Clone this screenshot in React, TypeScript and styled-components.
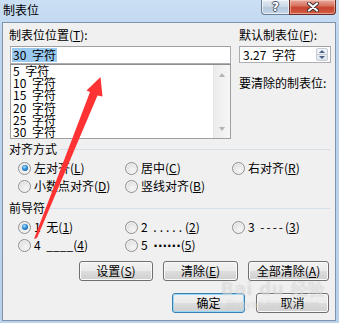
import React from 'react';
import styled, { createGlobalStyle, css } from 'styled-components';

const Global = createGlobalStyle`
  html, body { margin: 0; padding: 0; width: 339px; height: 323px; overflow: hidden; }
  body {
    font-family: "Noto Sans CJK SC", "Noto Sans", "DejaVu Sans", sans-serif;
    font-size: 12px;
    word-spacing: 3px;
    color: #000;
  }
  * { box-sizing: border-box; }
`;

const Window = styled.div`
  position: relative;
  width: 339px;
  height: 323px;
  display: flex;
  flex-direction: column;
  padding: 0 3px 2px 2px;
  background: linear-gradient(to bottom, #cadff3 0px, #bdd5ee 40px, #b9d1ea 100%);
`;

const TitleBar = styled.div`
  height: 22px;
  flex-shrink: 0;
  display: flex;
  align-items: flex-start;
`;

const Title = styled.div`
  padding: 2px 0 0 1px;
  font-size: 12px;
  line-height: 16px;
  color: #000;
`;

const CaptionButtons = styled.div`
  margin-left: auto;
  display: flex;
`;

const CaptionBase = css`
  height: 15px;
  display: flex;
  align-items: center;
  justify-content: center;
  border: 1px solid #6d7f99;
  border-top: none;
`;

const HelpBtn = styled.div`
  ${CaptionBase};
  width: 28px;
  border-right: none;
  border-bottom-left-radius: 4px;
  background: linear-gradient(to bottom, #e3ebf4 0%, #cdd9e7 45%, #b6c8dc 55%, #c5d6e8 100%);
  box-shadow: inset 0 0 0 1px rgba(255, 255, 255, 0.6);
  color: #fff;
  font-family: "DejaVu Sans", sans-serif;
  font-weight: bold;
  font-size: 12px;
  line-height: 12px;
  text-shadow: 1px 0 0 #4a5566, -1px 0 0 #4a5566, 0 1px 0 #4a5566, 0 -1px 0 #4a5566;
`;

const CloseBtn = styled.div`
  ${CaptionBase};
  width: 47px;
  border-color: #6b2a24;
  border-bottom-right-radius: 4px;
  background: linear-gradient(to bottom, #e8a99d 0%, #d8745f 40%, #c7432f 55%, #d35e45 100%);
  box-shadow: inset 0 0 0 1px rgba(255, 220, 210, 0.5);
`;

const Client = styled.div`
  flex: 1;
  display: flex;
  flex-direction: column;
  border: 1px solid #7f93ab;
  background: #f0f0f0;
  padding: 4px 3px 0 6px;
`;

const TopSection = styled.div`
  display: flex;
  gap: 8px;
`;

const LeftCol = styled.div`
  width: 222px;
  display: flex;
  flex-direction: column;
`;

const RightCol = styled.div`
  flex: 1;
  display: flex;
  flex-direction: column;
`;

const Label = styled.div`
  line-height: 16px;
  height: 16px;
  white-space: nowrap;
  margin-bottom: 3px;
`;

const U = styled.span`
  text-decoration: underline;
`;

const TextBox = styled.div`
  margin-left: 1px;
  height: 18px;
  border: 1px solid #abadb3;
  border-top-color: #a0a0a0;
  background: #fff;
  padding: 1px 0 0 1px;
  line-height: 13px;
  display: flex;
  align-items: flex-start;
`;

const Selected = styled.span`
  background: #99c9ef;
  padding: 0 1px;
  line-height: 14px;
  white-space: pre;
`;

const ListBox = styled.div`
  margin-left: 1px;
  height: 75px;
  border: 1px solid #a0a0a0;
  border-top-color: #8e8e8e;
  background: #fff;
  display: flex;
`;

const ListItems = styled.div`
  flex: 1;
  padding: 0 0 0 2px;
`;

const ListItem = styled.div`
  line-height: 12.2px;
  height: 12.2px;
  white-space: pre;
`;

const ScrollBar = styled.div`
  width: 17px;
  background: linear-gradient(to right, #ececec, #f6f6f6);
  border-left: 1px solid #e6e6e6;
  display: flex;
  flex-direction: column;
  justify-content: space-between;
  align-items: center;
  padding: 8px 0 7px;
`;

const Tri = styled.div<{ $down?: boolean }>`
  width: 0;
  height: 0;
  border-left: 3.5px solid transparent;
  border-right: 3.5px solid transparent;
  ${(p) =>
    p.$down
      ? css`border-top: 4px solid #b4b4b4;`
      : css`border-bottom: 4px solid #b4b4b4;`}
`;

const SpinBox = styled.div`
  height: 17px;
  width: 92px;
  border: 1px solid #abadb3;
  border-top-color: #a0a0a0;
  background: #fff;
  display: flex;
  align-items: center;
  padding: 0 2px 0 3px;
`;

const SpinText = styled.span`
  flex: 1;
  line-height: 14px;
  white-space: pre;
`;

const SpinButtons = styled.div`
  width: 12px;
  height: 13px;
  display: flex;
  flex-direction: column;
  border: 1px solid #c5ccd6;
  border-radius: 2px;
  background: linear-gradient(to bottom, #f4f6f9, #dfe5ec);
`;

const SpinHalf = styled.div`
  flex: 1;
  display: flex;
  align-items: center;
  justify-content: center;
  & + & { border-top: 1px solid #c5ccd6; }
`;

const SmallTri = styled.div<{ $down?: boolean }>`
  width: 0;
  height: 0;
  border-left: 3px solid transparent;
  border-right: 3px solid transparent;
  ${(p) =>
    p.$down
      ? css`border-top: 3px solid #4d6185;`
      : css`border-bottom: 3px solid #4d6185;`}
`;

const Note = styled.div`
  margin-top: 12px;
  line-height: 16px;
  white-space: nowrap;
`;

const Group = styled.div<{ $top: number }>`
  margin-top: ${(p) => p.$top}px;
  display: flex;
  flex-direction: column;
`;

const GroupHeader = styled.div`
  display: flex;
  align-items: center;
  gap: 3px;
  line-height: 16px;
  height: 16px;
  padding-right: 2px;
  &::after {
    content: "";
    flex: 1;
    height: 1px;
    background: #d5dfe5;
  }
`;

const RadioGrid = styled.div`
  margin: 2px 0 0 9px;
  display: grid;
  grid-template-columns: 107px 107px auto;
  grid-auto-rows: 18px;
`;

const RadioItem = styled.div`
  display: flex;
  align-items: center;
  gap: 3px;
  white-space: pre;
  line-height: 16px;
`;

const RadioDot = styled.span<{ $on?: boolean }>`
  position: relative;
  width: 13px;
  height: 13px;
  flex-shrink: 0;
  border-radius: 50%;
  border: 1px solid #8e8f8f;
  background: radial-gradient(circle at 60% 65%, #f6f6f6 0%, #e4e4e4 55%, #cfcfcf 100%);
  box-shadow: inset 0 0 0 1px #f4f4f4;
  ${(p) =>
    p.$on &&
    css`
      &::after {
        content: "";
        position: absolute;
        left: 2.5px;
        top: 2.5px;
        width: 6px;
        height: 6px;
        border-radius: 50%;
        background: radial-gradient(circle at 40% 35%, #a8e0ff 0%, #2a8ad6 45%, #0c4f92 100%);
      }
    `}
`;

const LeaderMark = styled.span<{ $ls: number; $mono?: boolean }>`
  letter-spacing: ${(p) => p.$ls}px;
  ${(p) =>
    p.$mono &&
    css`
      font-family: "DejaVu Sans", sans-serif;
      font-weight: bold;
    `}
`;

const ButtonsArea = styled.div`
  margin-top: 7px;
  padding-right: 3px;
  display: flex;
  flex-direction: column;
  align-items: flex-end;
  gap: 12px;
`;

const ButtonRow = styled.div<{ $gap: number }>`
  display: flex;
  gap: ${(p) => p.$gap}px;
`;

const Button = styled.div<{ $w: number; $default?: boolean }>`
  width: ${(p) => p.$w}px;
  height: 20px;
  display: flex;
  align-items: center;
  justify-content: center;
  border-radius: 3px;
  border: 1px solid #707070;
  background: linear-gradient(to bottom, #f2f2f2 0%, #ebebeb 48%, #dddddd 52%, #cfcfcf 100%);
  box-shadow: inset 0 0 0 1px #fafafa;
  white-space: pre;
  word-spacing: 0;
  line-height: 14px;
  ${(p) =>
    p.$default &&
    css`
      border-color: #3c7fb1;
      box-shadow: inset 0 0 0 1px #98d8f6;
    `}
`;

const Overlay = styled.svg`
  position: absolute;
  left: 0;
  top: 0;
  pointer-events: none;
`;

const Watermark = styled.div`
  position: absolute;
  left: 221px;
  top: 280px;
  display: flex;
  flex-direction: column;
  pointer-events: none;
  color: rgba(255, 255, 255, 0.4);
  text-shadow: 0 0 1px rgba(140, 140, 140, 0.35);
  word-spacing: 0;
`;

const WmTop = styled.div`
  font-family: "DejaVu Sans", sans-serif;
  font-weight: bold;
  font-size: 17px;
  line-height: 19px;
  letter-spacing: 0.5px;
  white-space: pre;
`;

const WmSub = styled.div`
  font-family: "DejaVu Sans", sans-serif;
  font-size: 10px;
  line-height: 12px;
  white-space: pre;
  margin-left: 6px;
`;

const listItems = ['5 字符', '10 字符', '15 字符', '20 字符', '25 字符', '30 字符'];

type RadioDef = { on?: boolean; label: React.ReactNode };

const align: RadioDef[] = [
  { on: true, label: <>左对齐(<U>L</U>)</> },
  { label: <>居中(<U>C</U>)</> },
  { label: <>右对齐(<U>R</U>)</> },
  { label: <>小数点对齐(<U>D</U>)</> },
  { label: <>竖线对齐(<U>B</U>)</> },
];

const leaders: RadioDef[] = [
  { on: true, label: <>1 无(<U>1</U>)</> },
  { label: <>2 <LeaderMark $ls={3}>.....</LeaderMark>(<U>2</U>)</> },
  { label: <>3 <LeaderMark $ls={2}>----</LeaderMark>(<U>3</U>)</> },
  { label: <>4 <LeaderMark $ls={0}>____</LeaderMark>(<U>4</U>)</> },
  { label: <>5 <LeaderMark $ls={0} $mono>······</LeaderMark>(<U>5</U>)</> },
];

function Radios({ items }: { items: RadioDef[] }) {
  return (
    <RadioGrid>
      {items.map((r, i) => (
        <RadioItem key={i}>
          <RadioDot $on={r.on} />
          <span>{r.label}</span>
        </RadioItem>
      ))}
    </RadioGrid>
  );
}

export default function App() {
  return (
    <>
      <Global />
      <Window>
        <TitleBar>
          <Title>制表位</Title>
          <CaptionButtons>
            <HelpBtn>?</HelpBtn>
            <CloseBtn>
              <svg width="12" height="10" viewBox="0 0 12 10">
                <path d="M2 1.5 L10 8.5 M10 1.5 L2 8.5" stroke="#3a2a2a" strokeWidth="4" strokeLinecap="round" />
                <path d="M2 1.5 L10 8.5 M10 1.5 L2 8.5" stroke="#ffffff" strokeWidth="2.2" strokeLinecap="round" />
              </svg>
            </CloseBtn>
          </CaptionButtons>
        </TitleBar>
        <Client>
          <TopSection>
            <LeftCol>
              <Label>制表位位置(<U>T</U>):</Label>
              <TextBox>
                <Selected>30 字符</Selected>
              </TextBox>
              <ListBox>
                <ListItems>
                  {listItems.map((t) => (
                    <ListItem key={t}>{t}</ListItem>
                  ))}
                </ListItems>
                <ScrollBar>
                  <Tri />
                  <Tri $down />
                </ScrollBar>
              </ListBox>
            </LeftCol>
            <RightCol>
              <Label>默认制表位(<U>F</U>):</Label>
              <SpinBox>
                <SpinText>3.27 字符</SpinText>
                <SpinButtons>
                  <SpinHalf>
                    <SmallTri />
                  </SpinHalf>
                  <SpinHalf>
                    <SmallTri $down />
                  </SpinHalf>
                </SpinButtons>
              </SpinBox>
              <Note>要清除的制表位:</Note>
            </RightCol>
          </TopSection>
          <Group $top={2}>
            <GroupHeader>对齐方式</GroupHeader>
            <Radios items={align} />
          </Group>
          <Group $top={5}>
            <GroupHeader>前导符</GroupHeader>
            <Radios items={leaders} />
          </Group>
          <ButtonsArea>
            <ButtonRow $gap={10}>
              <Button $w={74}>设置(<U>S</U>)</Button>
              <Button $w={75}>清除(<U>E</U>)</Button>
              <Button $w={81}>全部清除(<U>A</U>)</Button>
            </ButtonRow>
            <ButtonRow $gap={11}>
              <Button $w={73} $default>确定</Button>
              <Button $w={73}>取消</Button>
            </ButtonRow>
          </ButtonsArea>
        </Client>
        <Watermark>
          <WmTop>Bai du 经验</WmTop>
          <WmSub>jingyan.baidu.com</WmSub>
        </Watermark>
        <Overlay width="339" height="323" viewBox="0 0 339 323">
          <polygon
            points="100.5,77 102.5,96.5 97.5,95.5 37,238 34,239 90,92 86.5,90.5"
            fill="#ff3333"
          />
        </Overlay>
      </Window>
    </>
  );
}
